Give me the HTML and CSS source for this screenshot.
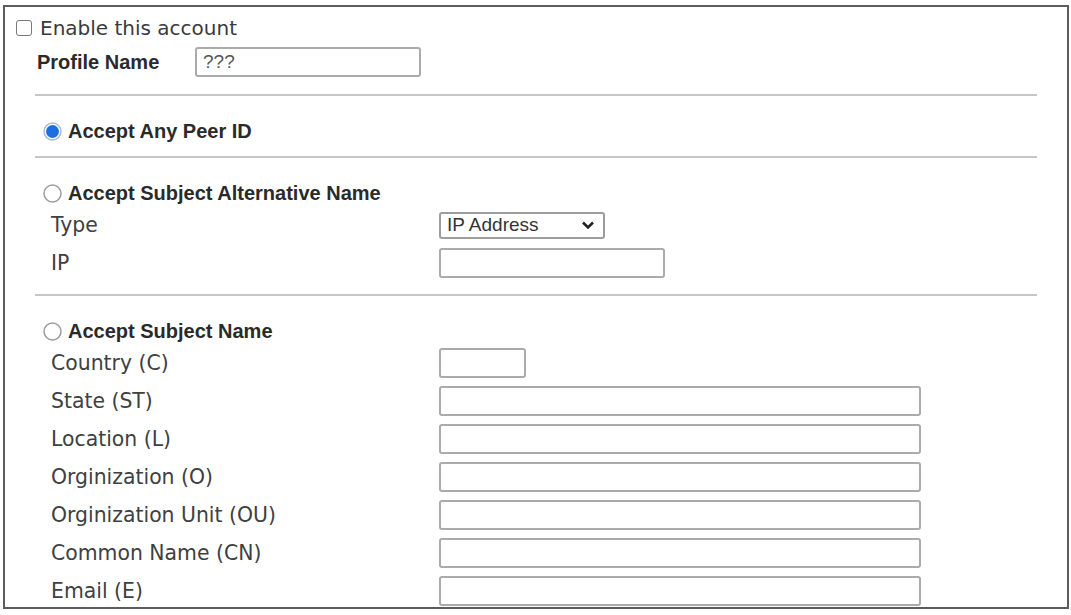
FILE: index.html
```html
<!DOCTYPE html>
<html lang="en">
<head>
  <meta charset="UTF-8" />
  <title>Peer ID</title>
  <link rel="stylesheet" href="styles.css">
</head>
<body>

  <div class="frame">

    <!-- Enable checkbox -->
    <div class="enable-row">
      <span class="checkbox"></span>
      <span class="enable-text">Enable this account</span>
    </div>

    <div class="profile-row">
      <div class="profile-label">Profile Name</div>
      <div class="input profile-input">???</div>
    </div>

    <div class="sections">
      <div class="divider"></div>

      <!-- Accept any peer -->
      <div class="section section-any">
        <div class="heading">
          <svg class="radio" width="19" height="19" viewBox="0 0 19 19">
            <circle cx="9.5" cy="9.5" r="8.5" fill="#fff" stroke="#a9bad3" stroke-width="1.5" />
            <circle cx="9.5" cy="9.5" r="6.5" fill="#1b6fe2" />
          </svg>
          Accept Any Peer ID
        </div>
      </div>

      <div class="divider"></div>

      <!-- Subject alternative name -->
      <div class="section">
        <div class="heading">
          <svg class="radio" width="19" height="19" viewBox="0 0 19 19">
            <circle cx="9.5" cy="9.5" r="8.5" fill="#fff" stroke="#9c9c9c" stroke-width="1.5" />
          </svg>
          Accept Subject Alternative Name
        </div>
        <div class="field-row">
          <div class="field-label">Type</div>
          <div class="select">
            <span>IP Address</span>
            <svg class="chevron" width="14" height="10" viewBox="0 0 14 10">
              <path d="M2 2.5 L7 7.5 L12 2.5" fill="none" stroke="#222" stroke-width="2.6" />
            </svg>
          </div>
        </div>
        <div class="field-row">
          <div class="field-label">IP</div>
          <div class="input input-md"></div>
        </div>
      </div>

      <div class="divider"></div>

      <!-- Subject name -->
      <div class="section section-last">
        <div class="heading">
          <svg class="radio" width="19" height="19" viewBox="0 0 19 19">
            <circle cx="9.5" cy="9.5" r="8.5" fill="#fff" stroke="#9c9c9c" stroke-width="1.5" />
          </svg>
          Accept Subject Name
        </div>
        <div class="field-row">
          <div class="field-label">Country (C)</div>
          <div class="input input-sm"></div>
        </div>
        <div class="field-row">
          <div class="field-label">State (ST)</div>
          <div class="input input-lg"></div>
        </div>
        <div class="field-row">
          <div class="field-label">Location (L)</div>
          <div class="input input-lg"></div>
        </div>
        <div class="field-row">
          <div class="field-label">Orginization (O)</div>
          <div class="input input-lg"></div>
        </div>
        <div class="field-row">
          <div class="field-label">Orginization Unit (OU)</div>
          <div class="input input-lg"></div>
        </div>
        <div class="field-row">
          <div class="field-label">Common Name (CN)</div>
          <div class="input input-lg"></div>
        </div>
        <div class="field-row">
          <div class="field-label">Email (E)</div>
          <div class="input input-lg"></div>
        </div>
      </div>
    </div>

  </div>

</body>
</html>
```

FILE: styles.css
```css
body {
  margin: 0;
  padding: 0;
  background-color: #fff;
  font-family: "DejaVu Sans", Verdana, sans-serif;
  color: #3a3a3a;
}

/* outer box */
.frame {
  box-sizing: border-box;
  width: 1066px;
  height: 604px;
  margin: 5px 0 0 3px;
  border: 2px solid #5c5c5c;
  overflow: hidden;
}

.enable-row {
  display: flex;
  align-items: center;
  height: 24px;
  margin-top: 9px;
  padding-left: 11px;
  font-size: 20px;
}

.checkbox {
  box-sizing: border-box;
  width: 16px;
  height: 16px;
  border: 1.5px solid #7a7a7a;
  border-radius: 3px;
  margin-right: 8px;
}

.profile-row {
  display: flex;
  align-items: center;
  height: 30px;
  margin-top: 7px;
  padding-left: 32px;
}

.profile-label {
  width: 158px;
  font-family: "Liberation Sans", Arial, sans-serif;
  font-weight: bold;
  font-size: 20px;
  color: #2a2a2a;
}

.input {
  box-sizing: border-box;
  height: 30px;
  border: 2px solid #ababab;
  border-radius: 3px;
  background-color: #fff;
}

.profile-input {
  width: 226px;
  padding-left: 6px;
  line-height: 26px;
  font-family: "Liberation Sans", Arial, sans-serif;
  font-size: 19px;
  color: #555;
}

.sections {
  width: 1002px;
  margin-left: 30px;
  margin-top: 17px;
}

.divider {
  height: 2px;
  background-color: #c6c6c6;
}

.section {
  padding-top: 22px;
  padding-bottom: 12px;
}

.section-last {
  padding-bottom: 0;
}

.heading {
  display: flex;
  align-items: center;
  height: 26px;
  padding-left: 8px;
  font-family: "Liberation Sans", Arial, sans-serif;
  font-weight: bold;
  font-size: 20px;
  color: #2a2a2a;
}

.radio {
  margin-right: 6px;
}

.field-row {
  display: flex;
  align-items: center;
  height: 38px;
  padding-left: 16px;
}

.field-label {
  width: 388px;
  font-size: 20.4px;
  color: #404040;
}

.select {
  box-sizing: border-box;
  display: flex;
  align-items: center;
  justify-content: space-between;
  width: 166px;
  height: 27px;
  padding: 0 8px 0 6px;
  border: 2px solid #9d9d9d;
  border-radius: 3px;
  font-family: "Liberation Sans", Arial, sans-serif;
  font-size: 19px;
  color: #333;
}

.input-sm {
  width: 87px;
}

.input-md {
  width: 226px;
}

.input-lg {
  width: 482px;
}
```
